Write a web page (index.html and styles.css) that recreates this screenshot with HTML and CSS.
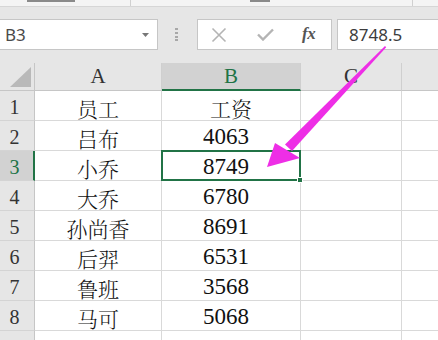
FILE: index.html
```html
<!DOCTYPE html>
<html lang="zh-CN">
<head>
<meta charset="utf-8">
<title>Excel</title>
<link rel="stylesheet" href="styles.css">
</head>
<body>
<div class="page">
  <div class="ribbon">
    <span class="frag frag1"></span>
    <span class="vsep vsep1"></span>
    <span class="frag frag2"></span>
    <span class="vsep vsep2"></span>
  </div>
  <div class="fbar">
    <div class="namebox">
      <span class="name">B3</span>
      <svg class="dd" width="7" height="4" viewBox="0 0 7 4"><path d="M0 0H7L3.5 4Z" fill="#777"/></svg>
    </div>
    <div class="grip">
      <svg width="3" height="13" viewBox="0 0 3 13"><rect x="0" y="0" width="3" height="2" fill="#a8a8a8"/><rect x="0" y="4" width="3" height="2" fill="#a8a8a8"/><rect x="0" y="8" width="3" height="2" fill="#a8a8a8"/><rect x="0" y="11" width="3" height="2" fill="#a8a8a8"/></svg>
    </div>
    <div class="fxbox">
      <svg class="ico" width="16" height="16" viewBox="0 0 16 16"><path d="M1.5 1.5L14.5 14.5M14.5 1.5L1.5 14.5" stroke="#b4b4b4" stroke-width="1.6" fill="none"/></svg>
      <svg class="ico" width="17" height="13" viewBox="0 0 17 13"><path d="M1 6.5L6 11.5L16 1.5" stroke="#b4b4b4" stroke-width="2.4" fill="none"/></svg>
      <span class="fx">fx</span>
    </div>
    <div class="content">8748.5</div>
  </div>
  <div class="sheet">
    <div class="hd corner"><svg width="21" height="20" viewBox="0 0 21 20"><path d="M21 0V20H0Z" fill="#b9b9b9"/></svg></div>
    <div class="hd col">A</div>
    <div class="hd col sel-col">B</div>
    <div class="hd col">C</div>
    <div class="hd col last"></div>

    <div class="hd row">1</div><div class="c">员工</div><div class="c">工资</div><div class="c"></div><div class="c last"></div>
    <div class="hd row">2</div><div class="c">吕布</div><div class="c num">4063</div><div class="c"></div><div class="c last"></div>
    <div class="hd row sel-row">3</div><div class="c">小乔</div><div class="c num active">8749<span class="handle"></span></div><div class="c"></div><div class="c last"></div>
    <div class="hd row">4</div><div class="c">大乔</div><div class="c num">6780</div><div class="c"></div><div class="c last"></div>
    <div class="hd row">5</div><div class="c">孙尚香</div><div class="c num">8691</div><div class="c"></div><div class="c last"></div>
    <div class="hd row">6</div><div class="c">后羿</div><div class="c num">6531</div><div class="c"></div><div class="c last"></div>
    <div class="hd row">7</div><div class="c">鲁班</div><div class="c num">3568</div><div class="c"></div><div class="c last"></div>
    <div class="hd row">8</div><div class="c">马可</div><div class="c num">5068</div><div class="c"></div><div class="c last"></div>
    <div class="hd row"></div><div class="c"></div><div class="c"></div><div class="c"></div><div class="c last"></div>
  </div>
  <svg class="arrow" width="438" height="340" viewBox="0 0 438 340">
    <polygon points="385,46 386.2,47.2 292,151 285,144.5" fill="#ee2ee6"/>
    <polygon points="267,167 275,143 300,158" fill="#ee2ee6"/>
  </svg>
</div>
</body>
</html>
```

FILE: styles.css
```css
* { box-sizing: border-box; }
html, body { margin: 0; padding: 0; }
body {
  width: 438px;
  height: 340px;
  overflow: hidden;
  background: #e6e6e6;
}
.page {
  position: relative;
  width: 438px;
  height: 340px;
  overflow: hidden;
}
.ribbon {
  height: 7px;
  background: #f4f4f4;
  border-bottom: 1px solid #d6d6d6;
  display: flex;
  align-items: flex-start;
}
.frag { height: 2px; background: #8a8a8a; }
.frag1 { width: 48px; margin-left: 27px; }
.vsep { width: 1px; height: 6px; background: #d0d0d0; }
.vsep1 { margin-left: 55px; }
.frag2 { width: 20px; margin-left: 119px; }
.vsep2 { margin-left: 142px; }

.fbar {
  margin-top: 12px;
  height: 31px;
  display: flex;
}
.namebox {
  width: 158px;
  background: #fff;
  border: 1px solid #c6c6c6;
  border-left: none;
  display: flex;
  align-items: center;
  padding-left: 5px;
  padding-right: 8px;
}
.name {
  flex: 1;
  font-family: "Noto Sans", sans-serif;
  font-size: 17px;
  color: #4a4a4a;
}
.dd { display: block; }
.grip {
  width: 39px;
  display: flex;
  align-items: center;
  justify-content: center;
  padding-right: 2px;
}
.fxbox {
  width: 135px;
  background: #fff;
  border: 1px solid #c6c6c6;
  display: flex;
  align-items: center;
  padding-left: 13px;
}
.ico { display: block; }
.fxbox .ico:first-child { margin-right: 30px; }
.fxbox .ico:nth-child(2) { margin-right: 28px; }
.fx {
  font-family: "Liberation Serif", serif;
  font-style: italic;
  font-weight: bold;
  font-size: 17px;
  color: #555;
  letter-spacing: -0.5px;
  padding-bottom: 2px;
}
.content {
  flex: 1;
  margin-left: 5px;
  background: #fff;
  border: 1px solid #c6c6c6;
  border-right: none;
  display: flex;
  align-items: center;
  padding-left: 11px;
  font-family: "Noto Sans", sans-serif;
  font-size: 17px;
  color: #3c3c3c;
}

.sheet {
  margin-top: 13px;
  display: grid;
  grid-template-columns: 35px 127px 139px 101px 36px;
  grid-template-rows: 28px repeat(8, 30px) 30px;
  background: #fff;
}
.hd {
  background: #e6e6e6;
  font-family: "Liberation Serif", serif;
  color: #333;
  display: flex;
  justify-content: center;
}
.corner {
  border-right: 1px solid #c6c6c6;
  border-bottom: 1px solid #c6c6c6;
  align-items: flex-end;
  justify-content: flex-end;
  padding: 0 3px 3px 0;
}
.corner svg { display: block; }
.col {
  font-size: 21px;
  align-items: flex-end;
  padding-bottom: 1px;
  border-right: 1px solid #cfcfcf;
  border-bottom: 1px solid #c6c6c6;
}
.col.last { border-right: none; }
.sel-col {
  background: #d2d2d2;
  color: #217346;
  border-bottom: 2px solid #217346;
  padding-bottom: 0;
}
.row {
  font-size: 20px;
  align-items: center;
  padding-top: 3px;
  padding-right: 5px;
  border-right: 1px solid #c6c6c6;
  border-bottom: 1px solid #d4d4d4;
}
.sel-row {
  background: #d2d2d2;
  color: #217346;
  border-right: 2px solid #217346;
  padding-right: 4px;
}
.c {
  position: relative;
  border-right: 1px solid #d9d9d9;
  border-bottom: 1px solid #d9d9d9;
  display: flex;
  align-items: center;
  justify-content: center;
  padding-top: 4px;
  font-family: "Noto Serif CJK SC", "Noto Sans CJK SC", serif;
  font-weight: 300;
  font-size: 21px;
  color: #111;
}
.c.last { border-right: none; }
.num {
  font-family: "Liberation Serif", serif;
  font-size: 23px;
  font-weight: normal;
  padding-right: 10px;
  padding-top: 3px;
}
.active::after {
  content: "";
  position: absolute;
  left: -1px;
  top: -1px;
  right: -1px;
  bottom: -1px;
  border: 2px solid #217346;
  pointer-events: none;
}
.handle {
  position: absolute;
  right: -3px;
  bottom: -3px;
  width: 6px;
  height: 6px;
  background: #217346;
  border: 1px solid #fff;
  z-index: 2;
}
.arrow {
  position: absolute;
  left: 0;
  top: 0;
  pointer-events: none;
}
```
